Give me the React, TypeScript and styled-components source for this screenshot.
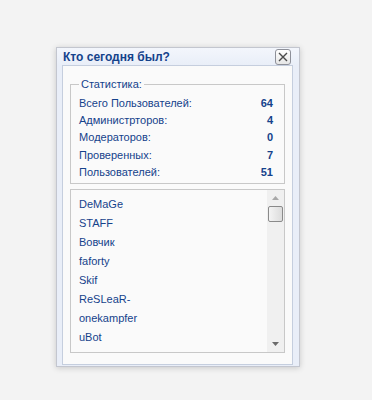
import styled, { createGlobalStyle } from "styled-components";

const stats = [
  { label: "Всего Пользователей:", value: 64 },
  { label: "Администрторов:", value: 4 },
  { label: "Модераторов:", value: 0 },
  { label: "Проверенных:", value: 7 },
  { label: "Пользователей:", value: 51 },
];

const users = ["DeMaGe", "STAFF", "Вовчик", "faforty", "Skif", "ReSLeaR-", "onekampfer", "uBot"];

export default function App() {
  return (
    <>
      <GlobalStyle />
      <Page>
        <Dialog>
          <Header>
            <Title>Кто сегодня был?</Title>
            <CloseButton aria-label="close">
              <svg width="10" height="10" viewBox="0 0 10 10">
                <path d="M1 1 L9 9 M9 1 L1 9" stroke="#4a4a4a" strokeWidth="1.4" />
              </svg>
            </CloseButton>
          </Header>
          <Body>
            <Fieldset>
              <Legend>Статистика:</Legend>
              {stats.map((s) => (
                <StatRow key={s.label}>
                  <span>{s.label}</span>
                  <StatValue>{s.value}</StatValue>
                </StatRow>
              ))}
            </Fieldset>
            <ListBox>
              <UserList>
                {users.map((u) => (
                  <UserItem key={u}>{u}</UserItem>
                ))}
              </UserList>
              <Scrollbar>
                <ArrowButton>
                  <svg width="7" height="4" viewBox="0 0 7 4">
                    <path d="M0 4 L3.5 0 L7 4 Z" fill="#a8a8a8" />
                  </svg>
                </ArrowButton>
                <Thumb />
                <Track />
                <ArrowButton>
                  <svg width="7" height="4" viewBox="0 0 7 4">
                    <path d="M0 0 L7 0 L3.5 4 Z" fill="#6b6b6b" />
                  </svg>
                </ArrowButton>
              </Scrollbar>
            </ListBox>
          </Body>
        </Dialog>
      </Page>
    </>
  );
}

/** styles */

const GlobalStyle = createGlobalStyle`
  body {
    margin: 0;
    background: #f3f3f3;
    font-family: Tahoma, "Liberation Sans", Arial, sans-serif;
    font-size: 11px;
  }
`;

const Page = styled.div`
  width: 372px;
  height: 400px;
  padding: 47px 0 0 56px;
  box-sizing: border-box;
`;

const Dialog = styled.div`
  width: 244px;
  height: 320px;
  box-sizing: border-box;
  border: 1px solid #c3c6cf;
  background: #e9eef8;
  box-shadow: 0 1px 6px rgba(0, 0, 0, 0.18);
  padding: 0 6px 6px 5px;
  display: flex;
  flex-direction: column;
`;

const Header = styled.div`
  height: 25px;
  display: flex;
  align-items: center;
  justify-content: space-between;
  background: linear-gradient(#f3f6fc, #e9eef8);
  margin: 0 -6px 0 -5px;
  padding: 1px 8px 0 6px;
  box-sizing: border-box;
`;

const Title = styled.div`
  font-weight: bold;
  font-size: 12px;
  color: #15428b;
`;

const CloseButton = styled.div`
  width: 16px;
  height: 16px;
  box-sizing: border-box;
  border: 1px solid #8e9099;
  border-radius: 3px;
  background: linear-gradient(#ffffff, #e6e6e6);
  display: flex;
  align-items: center;
  justify-content: center;
`;

const Body = styled.div`
  flex: 1;
  border: 1px solid #c5cede;
  background: #fafafa;
  padding: 12px 7px 11px;
  display: flex;
  flex-direction: column;
  gap: 5px;
`;

const Fieldset = styled.fieldset`
  margin: 0;
  border: 1px solid #c8c8c8;
  padding: 4px 11px 2px 8px;
  display: flex;
  flex-direction: column;
`;

const Legend = styled.legend`
  padding: 0 2px;
  margin-left: 0;
  color: #15428b;
`;

const StatRow = styled.div`
  height: 17.4px;
  display: flex;
  align-items: center;
  justify-content: space-between;
  color: #15428b;
`;

const StatValue = styled.span`
  font-weight: bold;
`;

const ListBox = styled.div`
  flex: 1;
  border: 1px solid #c8c8c8;
  background: #fafafa;
  display: flex;
`;

const UserList = styled.ul`
  flex: 1;
  margin: 0;
  padding: 5px 8px;
  list-style: none;
`;

const UserItem = styled.li`
  height: 19px;
  display: flex;
  align-items: center;
  color: #15428b;
`;

const Scrollbar = styled.div`
  width: 17px;
  background: #f0f0f0;
  display: flex;
  flex-direction: column;
`;

const ArrowButton = styled.div`
  height: 16px;
  display: flex;
  align-items: center;
  justify-content: center;
`;

const Thumb = styled.div`
  height: 16px;
  margin: 0 1px;
  box-sizing: border-box;
  border: 1px solid #8a8a8a;
  border-radius: 2px;
  background: linear-gradient(90deg, #f4f4f4, #dcdcdc);
`;

const Track = styled.div`
  flex: 1;
`;
